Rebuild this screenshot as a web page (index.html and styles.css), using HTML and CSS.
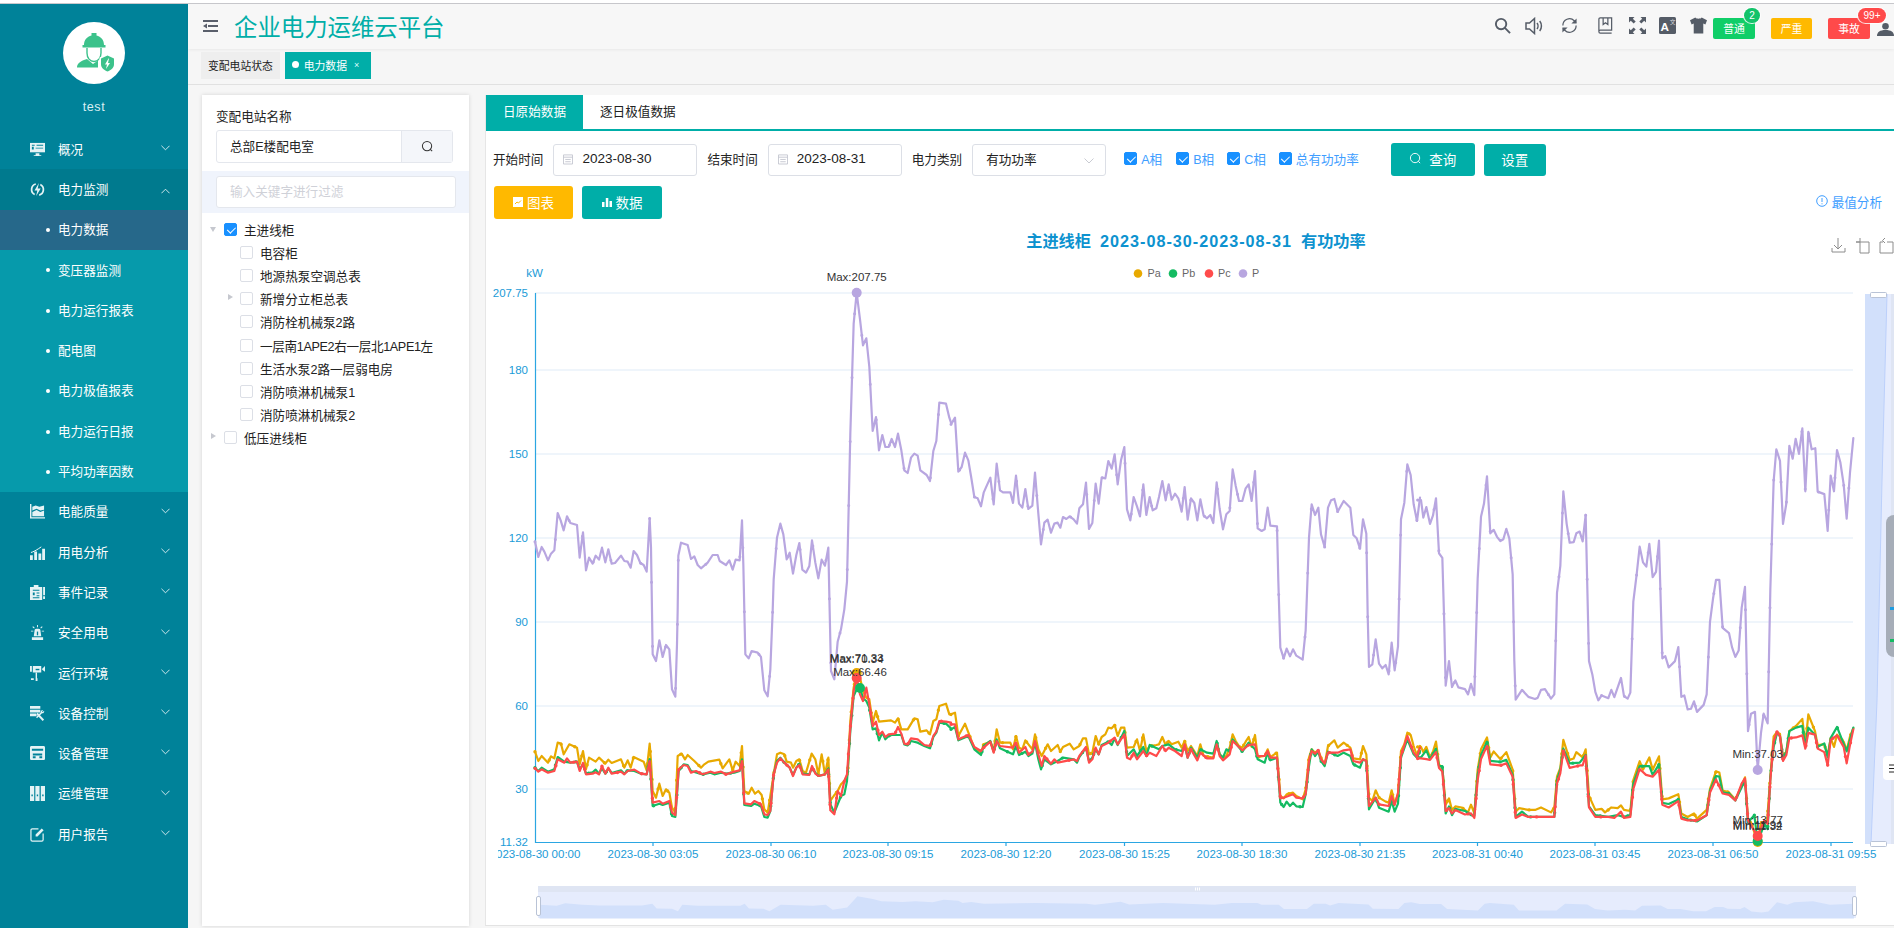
FILE: index.html
```html
<!DOCTYPE html>
<html lang="zh-CN">
<head>
<meta charset="utf-8">
<title>企业电力运维云平台</title>
<link rel="stylesheet" href="styles.css">
</head>
<body>
<div class="top-strip"></div>
<div class="app">
  <aside class="sidebar">
    <div class="profile">
      <div class="avatar">
        <svg viewBox="0 0 62 62" width="62" height="62">
          <path class="av-g" d="M21 23c0-5 3-8.500 7.500-9.500V11h5v2.500c4.500 1 7.500 4.500 7.500 9.500h1.500v2.500H19.500V23z"/>
          <path class="av-l" d="M24 26v5c0 5 3 8.500 7 8.500s7-3.500 7-8.500v-5"/>
          <path class="av-g" d="M14 45.500c0-4 3.500-6.500 10-8.500l6 5 5-3.500v7H14z"/>
          <path class="av-w" d="M36.500 35.500l8-3.500 8 3.500v6.500c0 4.500-3.500 7-8 8.500-4.500-1.500-8-4-8-8.500z"/>
          <path class="av-g" d="M38 36.500l6.500-3 6.500 3v5.500c0 4-3 6-6.500 7.500-3.500-1.500-6.500-3.500-6.500-7.500z"/>
          <path class="av-w" d="M45.500 36.500l-3.500 6h2l-1 4.500 4-6h-2l1-4.500z"/>
        </svg>
      </div>
      <div class="username">test</div>
    </div>
    <nav class="menu">
      <a class="menu-item"><svg class="m-ico" viewBox="0 0 16 16"><path d="M0 1h16v10H0z"/><path class="cut" d="M2 3h3v1H2zM7 3h7v1H7zM2 5h2v3H2zM6 6h8v1H6z"/><path d="M6 12h4v2h2v1H4v-1h2z"/></svg><span>概况</span><svg class="chev" viewBox="0 0 10 6"><path d="M.5.5 5 5 9.500.5"/></svg></a>
      <a class="menu-item open"><svg class="m-ico" viewBox="0 0 16 16"><path d="M6 1.200A7 7 0 0 0 4.600 14.200l.8-1.600A5.200 5.200 0 0 1 6.400 3zM10 14.800a7 7 0 0 0 1.400-13l-.8 1.600a5.200 5.200 0 0 1-1 9.600z"/><path d="M9.500 1 4.800 9h3l-1.200 6 4.800-8.200H8.200z"/></svg><span>电力监测</span><svg class="chev" viewBox="0 0 10 6"><path d="M.5 5.500 5 1l4.500 4.500"/></svg></a>
      <div class="submenu">
        <a class="sub-item active"><span>电力数据</span></a>
        <a class="sub-item"><span>变压器监测</span></a>
        <a class="sub-item"><span>电力运行报表</span></a>
        <a class="sub-item"><span>配电图</span></a>
        <a class="sub-item"><span>电力极值报表</span></a>
        <a class="sub-item"><span>电力运行日报</span></a>
        <a class="sub-item"><span>平均功率因数</span></a>
      </div>
      <a class="menu-item"><svg class="m-ico" viewBox="0 0 16 16"><path d="M0 0h1.500v14H16v1.500H0z"/><path d="M2.500 3 6 1.500 10 3l5-1.500V6l-4 1-4-2-4.500 2z"/><path d="M2.500 8.500 7 6.500l4 2 4-1.500v6H2.500z"/></svg><span>电能质量</span><svg class="chev" viewBox="0 0 10 6"><path d="M.5.5 5 5 9.500.5"/></svg></a>
      <a class="menu-item"><svg class="m-ico" viewBox="0 0 16 16"><path d="M0 11h3v5H0zM4.500 7h3v9h-3zM9 9h3v7H9zM13 4h3v12h-3z"/><path d="M1 8c2-.5 5-2 8-4l3-2" fill="none" stroke="#fff"/></svg><span>用电分析</span><svg class="chev" viewBox="0 0 10 6"><path d="M.5.5 5 5 9.500.5"/></svg></a>
      <a class="menu-item"><svg class="m-ico" viewBox="0 0 16 16"><path d="M0 2h13v14H0zM4 0h5v3H4zM14 2h2v9h-2zM14 12h2v3h-2z"/><path class="cut" d="M3 5h7v1H3zM3 8h2v3H3zM7 8h3v1H7zM7 11h3v1H7zM3 13h7v1H3z"/></svg><span>事件记录</span><svg class="chev" viewBox="0 0 10 6"><path d="M.5.5 5 5 9.500.5"/></svg></a>
      <a class="menu-item"><svg class="m-ico" viewBox="0 0 16 16"><path d="M4 12 5 5c.300-1.500 5.700-1.500 6 0l1 7zM2 13h12v3H2z"/><path class="cut" d="M7.300 7h1.400v4H7.300z"/><path d="M7.500 0h1v2.500h-1zM1 6h2.500v1H1zM12.500 6H15v1h-2.500zM2.500 2l.800-.700L5 3l-.700.700zM11 3l1.700-1.700.800.700-1.800 1.700z"/></svg><span>安全用电</span><svg class="chev" viewBox="0 0 10 6"><path d="M.5.5 5 5 9.500.5"/></svg></a>
      <a class="menu-item"><svg class="m-ico" viewBox="0 0 16 16"><path d="M0 0h2v6H0zM3 0h9v7H3zM13 3l3-3v6l-3-2z"/><path d="M6 7h1.500v6H6zM1 13h3v2H1zM6 13h2v3H6z"/><path class="cut" d="M6 3h4v1.500H6z"/></svg><span>运行环境</span><svg class="chev" viewBox="0 0 10 6"><path d="M.5.5 5 5 9.500.5"/></svg></a>
      <a class="menu-item"><svg class="m-ico" viewBox="0 0 16 16"><path d="M0 0h11v3H0zM0 4h11v3H0zM0 8h7v3H0z"/><path d="M15 5c.600 1.500-.600 3-2.200 2.800L7.500 13l-1-1 5-5.300C11 5.500 12.500 4 14 4.300L12.800 5.800 13.500 6.500z"/><path d="M8 7l7 7.500-1.500 1.500L7 9z"/></svg><span>设备控制</span><svg class="chev" viewBox="0 0 10 6"><path d="M.5.5 5 5 9.500.5"/></svg></a>
      <a class="menu-item"><svg class="m-ico" viewBox="0 0 16 16"><path d="M0 1.500C0 .700.700 0 1.500 0h13c.800 0 1.500.700 1.500 1.500v12c0 .800-.700 1.500-1.500 1.500h-13C.700 15 0 14.300 0 13.500z"/><path class="cut" d="M2 3h12v2H2zM3 8h10v2H3zM3 11h3v2H3zM10 11h3v2h-3z"/></svg><span>设备管理</span><svg class="chev" viewBox="0 0 10 6"><path d="M.5.5 5 5 9.500.5"/></svg></a>
      <a class="menu-item"><svg class="m-ico" viewBox="0 0 16 16"><path d="M0 0h4.500v16H0zM5.700 0h4.500v16H5.700zM11.500 0H16v16h-4.500z"/><path class="cut" d="M1.500 9h1.500v2H1.500zM7.200 9h1.500v2H7.200zM13 9h1.500v2H13z"/></svg><span>运维管理</span><svg class="chev" viewBox="0 0 10 6"><path d="M.5.5 5 5 9.500.5"/></svg></a>
      <a class="menu-item"><svg class="m-ico" viewBox="0 0 16 16"><path class="line" d="M9 2H2.500C1.500 2 1 2.500 1 3.500v10c0 1 .500 1.500 1.500 1.500h10c1 0 1.500-.500 1.500-1.500V7"/><path d="M6 8 12.500 1.500 14.500 3.500 8 10H6z"/></svg><span>用户报告</span><svg class="chev" viewBox="0 0 10 6"><path d="M.5.5 5 5 9.500.5"/></svg></a>
    </nav>
  </aside>

  <div class="main">
    <header class="header">
      <svg class="burger" viewBox="0 0 15 12"><path d="M0 0h15v2H0zM5 5h10v2H5zM0 10h15v2H0zM0 6l4-2.500v5z"/></svg>
      <h1 class="brand">企业电力运维云平台</h1>
      <div class="tools">
        <div class="tool-icons">
          <svg viewBox="0 0 18 18"><circle cx="7.500" cy="7.500" r="5.500" class="hs"/><path class="hs" d="m11.500 11.500 5.500 5.500"/></svg>
          <svg class="speaker" viewBox="0 0 20 18"><path class="hs med" d="M1 6h3.500L9.500 1.500v15L4.500 12H1z"/><path class="hs med" d="M12 6c1.300 1.600 1.300 4.400 0 6M14.700 4c2.300 2.800 2.300 7.200 0 10"/></svg>
          <svg viewBox="0 0 18 18"><path class="hs thin" d="M2 9a7 7 0 0 1 12-5l2 2"/><path class="hs thin" d="M16 9a7 7 0 0 1-12 5l-2-2"/><path class="hf" d="M16.500 1.500V7H11zM1.500 16.500V11H7z"/></svg>
          <svg viewBox="0 0 16 18"><path class="hs thin" d="M1 15V2.500C1 1.500 1.500 1 2.500 1h12v13H2.500C1.500 14 1 14.500 1 15.500S1.500 17 2.500 17h12"/><path class="hs thin" d="M5.500 1v7l2.500-2 2.500 2V1"/></svg>
          <svg viewBox="0 0 17 17"><path class="hf" d="M0 0h5.500L3.800 1.700l2.900 2.900-2 2-2.900-2.900L0 5.500zM17 0v5.500l-1.800-1.800-2.900 2.900-2-2 2.900-2.900L11.500 0zM0 17v-5.500l1.800 1.800 2.900-2.900 2 2-2.900 2.900L5.500 17zM17 17h-5.500l1.700-1.700-2.900-2.900 2-2 2.900 2.900 1.800-1.800z"/></svg>
          <svg viewBox="0 0 16 16"><rect class="hf" width="16" height="16" rx="1.500"/><text x="1.500" y="13.500" class="tr-a">A</text><text x="10" y="6.500" class="tr-b">文</text></svg>
          <svg viewBox="0 0 16 15"><path class="hf" d="M5 0C6 1.500 10 1.500 11 0l5 2.500-1.500 4-2-.8V15H3.500V5.700l-2 .8L0 2.500z"/></svg>
        </div>
        <span class="badge green"><span class="badge-t">普通</span><b class="bubble b-green">2</b></span>
        <span class="badge amber"><span class="badge-t">严重</span></span>
        <span class="badge red"><span class="badge-t">事故</span><b class="bubble b-red">99+</b></span>
        <svg class="person" viewBox="0 0 17 13"><circle class="hf" cx="8.500" cy="3.300" r="3.300"/><path class="hf" d="M0 13c0-4 3-6 8.500-6S17 9 17 13z"/></svg>
      </div>
    </header>
    <div class="tabbar">
      <span class="tab">变配电站状态</span>
      <span class="tab on"><i></i>电力数据<em>×</em></span>
    </div>
    <div class="content">
      <section class="tree-card">
        <div class="tree-label">变配电站名称</div>
        <div class="station-input">
          <span class="station-name">总部E楼配电室</span>
          <span class="station-btn"><svg viewBox="0 0 14 14"><circle cx="6.500" cy="6.500" r="5"/><path d="m10 10 2 2"/></svg></span>
        </div>
        <div class="filter-band"><div class="filter-input">输入关键字进行过滤</div></div>
        <ul class="tree">
          <li class="root"><i class="arrow down"></i><i class="cb checked"></i>主进线柜</li>
          <li class="child"><i class="cb"></i>电容柜</li>
          <li class="child"><i class="cb"></i>地源热泵空调总表</li>
          <li class="child"><i class="arrow right"></i><i class="cb"></i>新增分立柜总表</li>
          <li class="child"><i class="cb"></i>消防栓机械泵2路</li>
          <li class="child tight"><i class="cb"></i>一层南1APE2右一层北1APE1左</li>
          <li class="child"><i class="cb"></i>生活水泵2路一层弱电房</li>
          <li class="child"><i class="cb"></i>消防喷淋机械泵1</li>
          <li class="child"><i class="cb"></i>消防喷淋机械泵2</li>
          <li class="root"><i class="arrow right"></i><i class="cb"></i>低压进线柜</li>
        </ul>
      </section>

      <section class="data-card">
        <div class="data-tabs">
          <span class="data-tab on">日原始数据</span>
          <span class="data-tab">逐日极值数据</span>
        </div>
        <div class="filters">
          <label class="f-label">开始时间</label>
          <div class="field date w-start"><svg class="cal" viewBox="0 0 11 12"><path d="M.5 1.500h10v10H.5zM.5 4h10M2.500 6.500h6M2.500 9h6"/></svg>2023-08-30</div>
          <label class="f-label">结束时间</label>
          <div class="field date w-end"><svg class="cal" viewBox="0 0 11 12"><path d="M.5 1.500h10v10H.5zM.5 4h10M2.500 6.500h6M2.500 9h6"/></svg>2023-08-31</div>
          <label class="f-label">电力类别</label>
          <div class="field select">有功功率<svg class="sel-chev" viewBox="0 0 10 6"><path d="M.5.500 5 5 9.500.500"/></svg></div>
          <span class="check c-a"><i class="cb checked"></i>A相</span>
          <span class="check c-b"><i class="cb checked"></i>B相</span>
          <span class="check c-c"><i class="cb checked"></i>C相</span>
          <span class="check c-p"><i class="cb checked"></i>总有功功率</span>
          <button class="btn teal query"><svg viewBox="0 0 14 14"><circle cx="6.500" cy="6.500" r="5"/><path d="m10 10 2 2"/></svg>查询</button>
          <button class="btn teal setting">设置</button>
        </div>
        <div class="actions">
          <button class="btn amber-btn"><svg class="fill" viewBox="0 0 10 10"><path d="M0 0h10v10H0z"/><path class="cut2" d="m2 7 2-2 1.500 1L8 3.500"/></svg>图表</button>
          <button class="btn teal data-btn"><svg class="fill" viewBox="0 0 10 10"><path d="M0 5h2.500v5H0zM3.800 1h2.500v9H3.800zM7.500 4H10v6H7.500z"/></svg>数据</button>
          <span class="analysis"><svg viewBox="0 0 12 12"><circle cx="6" cy="6" r="5.300"/><path d="M6 3v4M6 8.300v1"/></svg>最值分析</span>
        </div>

        <svg class="chart" viewBox="485 226 1409 700" width="1409" height="700">
          <defs><clipPath id="cvClip"><rect x="497" y="226" width="1397" height="700"/></clipPath></defs>
          <text class="c-title" x="1195" y="245.500">主进线柜  <tspan class="c-date">2023-08-30-2023-08-31</tspan>  有功功率</text>

          <g class="toolbox">
            <path d="M1837 237v11m-4-4 4 4 4-4M1831 247v4h13v-4"/>
            <path d="M1855 241h13v11h-9v-15M1855 241h4"/>
            <path d="M1882 241h-3v11h13v-11h-6M1884 237l-2.500 2.500 2.500 2.500"/>
          </g>

          <g class="legend">
            <circle cx="1137" cy="272.500" r="4.300" fill="#e8a900"/><text x="1146.500" y="276">Pa</text>
            <circle cx="1172" cy="272.500" r="4.300" fill="#14bb62"/><text x="1181" y="276">Pb</text>
            <circle cx="1208" cy="272.500" r="4.300" fill="#ff4b4b"/><text x="1217" y="276">Pc</text>
            <circle cx="1242" cy="272.500" r="4.300" fill="#b8a6e0"/><text x="1251" y="276">P</text>
          </g>

          <g class="grid">
            <path d="M534 292H1852M534 369H1852M534 453H1852M534 537H1852M534 621H1852M534 705H1852M534 788H1852"/>
          </g>
          <path class="axis" d="M534.500 292V841.500H1852M652 841v4M770 841v4M887 841v4M1005 841v4M1123.500 841v4M1241 841v4M1359 841v4M1476.500 841v4M1594 841v4M1712 841v4M1830 841v4"/>

          <g class="y-labels">
            <text x="533.500" y="276">kW</text>
            <text x="527" y="296">207.75</text>
            <text x="527" y="373">180</text>
            <text x="527" y="457">150</text>
            <text x="527" y="541">120</text>
            <text x="527" y="625">90</text>
            <text x="527" y="709">60</text>
            <text x="527" y="792">30</text>
            <text x="527" y="845">11.32</text>
          </g>
          <g class="x-labels" clip-path="url(#cvClip)">
            <text x="534" y="857">2023-08-30 00:00</text>
            <text x="652" y="857">2023-08-30 03:05</text>
            <text x="770" y="857">2023-08-30 06:10</text>
            <text x="887" y="857">2023-08-30 09:15</text>
            <text x="1005" y="857">2023-08-30 12:20</text>
            <text x="1123.500" y="857">2023-08-30 15:25</text>
            <text x="1241" y="857">2023-08-30 18:30</text>
            <text x="1359" y="857">2023-08-30 21:35</text>
            <text x="1476.500" y="857">2023-08-31 00:40</text>
            <text x="1594" y="857">2023-08-31 03:45</text>
            <text x="1712" y="857">2023-08-31 06:50</text>
            <text x="1830" y="857">2023-08-31 09:55</text>
          </g>

          <g class="line-set s-pa">
            <g transform="translate(500 610) scale(.33333)"><polyline id="paA" points="102,422 112,450 122,435 141,455 150,436 160,442 170,395 180,398 188,430 205,400 228,410 236,460 246,420 255,475 264,440 284,452 294,440 313,458 322,446 332,456 360,445 370,470 380,448 389,470 398,438 428,452 437,478 446,398 450,450 455,540 465,560 475,518 485,555 495,535 505,545 513,590 523,605 530,435 542,428 552,445 560,432 580,450 600,470 610,460 622,452 655,446 665,472 685,445 695,478 704,452 716,465 723,405 730,540 743,548 752,530 762,548 772,540 782,552 790,595 800,605 808,555 818,490 828,430 838,425 850,430 857,452 870,455 876,470 886,450 895,445 905,480 915,485 932,428 943,445 952,490 962,430 972,490 982,440 988,570 998,555 1010,540 1020,520 1030,510 1040,490 1048,330 1058,230 1067,185 1077,200 1086,240 1096,260 1105,265 1115,335 1125,300 1134,332 1170,328 1182,335 1191,322 1201,355 1220,355 1240,322 1250,325 1258,362 1277,358 1287,370 1297,330 1306,325 1315,285 1335,278 1345,310 1350,312"/></g>
            <g transform="translate(950 380) scale(.33333)"><polyline id="paB" points="0,1000 12,995 22,1065 42,1028 60,1075 70,1100 90,1115 98,1090 118,1082 128,1110 137,1045 147,1085 178,1085 186,1105 195,1065 204,1100 214,1105 223,1078 244,1105 252,1060 262,1105 272,1125 290,1090 300,1110 320,1092 328,1112 336,1098 356,1088 368,1105 385,1095 396,1072 405,1072 414,1120 424,1115 434,1065 443,1090 452,1068 463,1060 472,1040 482,1042 491,1032 500,1065 510,1040 520,1040 528,1100 548,1098 558,1075 567,1110 577,1060 586,1110 596,1095 616,1092 624,1090 634,1068 644,1092 653,1080 662,1090 682,1082 692,1100 701,1080 710,1110 720,1095 739,1125 748,1090 758,1125 787,1130 797,1085 806,1120 816,1130 826,1125 836,1100 845,1060 854,1080 864,1095 874,1100 884,1082 893,1068 902,1098 912,1062 920,1128 941,1125 950,1105 958,1128 978,1115 988,1245 998,1252 1007,1240 1026,1235 1036,1245 1055,1255 1064,1225 1074,1130 1082,1105 1092,1115 1102,1108 1110,1130 1121,1152 1131,1095 1150,1078 1160,1100 1178,1085 1198,1100 1207,1132 1227,1135 1236,1095 1246,1120 1254,1250 1264,1260 1274,1228 1284,1250 1304,1262 1313,1265 1322,1228 1331,1268 1341,1240 1350,1110 1360,1090 1369,1055 1379,1062 1388,1095 1398,1125 1407,1095"/></g>
            <g transform="translate(1420 380) scale(.33333 .35014)"><polyline id="paC" points="-10,1045 0,1045 7,1060 16,1045 27,1075 36,1058 45,1030 54,1095 64,1105 74,1210 84,1192 93,1225 103,1215 122,1218 141,1232 150,1210 160,1235 170,1110 180,1052 198,1018 208,1075 218,1058 238,1080 256,1060 275,1110 284,1230 294,1220 322,1225 342,1225 360,1218 390,1232 400,1218 408,1130 418,1105 427,1025 437,1055 446,1082 458,1078 466,1060 485,1075 494,1052 504,1185 523,1225 542,1222 552,1232 571,1218 590,1220 600,1212 609,1225 628,1228 637,1140 656,1086 666,1110 685,1075 695,1110 714,1072 724,1195 743,1192 772,1180 781,1235 800,1245 819,1235 828,1250 857,1225 867,1165 885,1115 895,1118 905,1170 924,1175 943,1195 962,1155 972,1132 981,1250 990,1260 1010,1318 1020,1260 1038,1260 1048,1130 1058,1015 1068,1002 1077,1010 1086,1075 1096,1058 1105,1000 1125,985 1144,965 1153,1040 1162,952 1182,1000 1190,1040 1210,1038 1220,1070 1229,1020 1239,1045 1248,1010 1268,1030 1277,1055 1287,1015 1297,992"/></g>
          </g>
          <g class="dot-set s-pa"><use href="#paA" transform="translate(500 610) scale(.33333)"/><use href="#paB" transform="translate(950 380) scale(.33333)"/><use href="#paC" transform="translate(1420 380) scale(.33333 .35014)"/></g>

          <g class="line-set s-pb">
            <g transform="translate(500 610) scale(.33333)"><polyline id="pbA" points="102,470 112,480 122,470 141,482 160,475 170,438 190,452 208,455 228,452 236,475 246,460 255,488 275,484 284,476 294,488 303,472 313,488 322,472 332,486 360,478 370,488 380,478 400,480 420,488 437,490 446,444 455,585 475,578 485,582 505,575 513,615 523,618 533,480 548,460 560,462 570,480 585,484 605,490 628,485 640,490 660,485 675,488 700,485 716,480 723,445 730,582 750,585 760,578 780,585 790,618 800,620 808,600 818,490 828,450 838,440 850,455 866,470 876,492 886,470 895,458 905,488 925,490 933,470 943,485 952,495 972,490 982,472 988,580 1000,605 1010,580 1020,555 1030,550 1038,510 1048,360 1058,255 1067,235 1077,230 1086,262 1096,270 1105,290 1115,355 1125,352 1134,388 1144,365 1153,385 1163,375 1172,372 1201,372 1210,400 1220,403 1230,390 1250,395 1270,405 1287,412 1297,378 1306,365 1315,335 1335,338 1350,352"/></g>
            <g transform="translate(950 380) scale(.33333)"><polyline id="pbB" points="0,1045 12,1038 22,1078 52,1065 70,1105 90,1122 98,1095 118,1080 128,1112 137,1075 147,1102 186,1120 195,1095 204,1122 223,1112 232,1125 244,1118 252,1085 262,1135 270,1165 280,1135 300,1150 320,1140 336,1130 368,1135 378,1145 385,1128 405,1100 414,1140 424,1130 434,1105 443,1120 452,1092 472,1082 482,1092 491,1072 500,1092 520,1050 528,1125 548,1105 558,1125 577,1098 586,1125 596,1092 624,1105 634,1095 653,1090 672,1105 692,1110 701,1095 710,1130 720,1100 739,1130 748,1105 768,1115 787,1118 797,1080 806,1120 816,1130 826,1105 836,1110 845,1075 874,1112 893,1085 912,1105 920,1135 941,1145 950,1115 958,1138 978,1130 988,1265 998,1278 1007,1262 1017,1275 1026,1265 1036,1276 1055,1278 1064,1240 1074,1155 1082,1105 1092,1125 1102,1112 1110,1140 1121,1155 1131,1112 1160,1125 1178,1115 1198,1125 1207,1150 1227,1160 1236,1135 1246,1140 1254,1285 1274,1250 1284,1280 1313,1292 1322,1260 1331,1292 1341,1268 1350,1130 1369,1075 1388,1120 1398,1130 1407,1110"/></g>
            <g transform="translate(1420 380) scale(.33333 .35014)"><polyline id="pbC" points="-10,1075 0,1075 16,1055 27,1080 45,1050 54,1100 64,1100 74,1235 84,1215 93,1240 103,1222 132,1228 150,1240 160,1242 170,1125 180,1068 198,1030 208,1085 238,1088 256,1082 275,1125 284,1245 303,1230 322,1245 390,1245 400,1245 408,1140 418,1110 427,1050 446,1092 476,1090 494,1068 504,1215 523,1240 562,1245 590,1240 609,1245 628,1240 637,1150 656,1100 685,1100 695,1125 714,1095 724,1205 743,1208 772,1195 781,1245 800,1252 828,1258 857,1240 867,1170 885,1128 895,1130 905,1175 924,1178 943,1198 962,1160 972,1140 981,1260 1000,1240 1010,1318 1030,1265 1040,1280 1048,1132 1058,1045 1068,1005 1077,1015 1086,1075 1096,1060 1105,1000 1125,990 1144,985 1153,1045 1162,990 1182,1010 1190,1045 1210,1035 1220,1075 1229,1020 1248,988 1277,1058 1297,990"/></g>
          </g>
          <g class="dot-set s-pb"><use href="#pbA" transform="translate(500 610) scale(.33333)"/><use href="#pbB" transform="translate(950 380) scale(.33333)"/><use href="#pbC" transform="translate(1420 380) scale(.33333 .35014)"/></g>

          <g class="line-set s-pc">
            <g transform="translate(500 610) scale(.33333)"><polyline id="pcA" points="102,472 112,482 122,475 141,485 160,480 170,445 190,455 198,442 208,455 228,452 236,480 246,456 255,490 275,488 284,484 294,490 303,465 313,488 322,470 332,488 360,482 370,490 380,480 400,476 420,488 437,490 446,450 455,575 475,570 485,578 505,570 513,605 523,612 533,475 548,462 560,465 570,485 585,480 605,490 628,482 640,486 660,482 675,490 700,482 716,478 723,450 730,577 750,580 760,570 780,580 790,610 800,612 808,600 818,490 828,455 838,442 850,455 866,470 876,495 886,470 895,462 905,490 925,492 933,465 943,488 952,495 972,490 982,475 988,598 1000,610 1010,540 1020,555 1030,510 1038,490 1048,350 1058,240 1067,200 1077,250 1086,270 1096,230 1105,280 1115,345 1125,332 1134,372 1144,362 1153,378 1163,370 1182,368 1191,348 1201,368 1210,398 1220,400 1230,382 1250,385 1270,402 1287,405 1297,375 1306,362 1315,330 1335,332 1350,335"/></g>
            <g transform="translate(950 380) scale(.33333)"><polyline id="pcB" points="0,1030 12,1030 22,1075 52,1062 70,1098 90,1110 98,1100 118,1082 128,1115 137,1080 147,1095 186,1100 195,1085 204,1115 223,1098 232,1120 244,1112 252,1080 262,1120 272,1155 280,1125 300,1148 310,1135 320,1145 368,1135 378,1140 385,1125 405,1098 414,1145 424,1135 434,1100 443,1120 452,1095 472,1085 491,1070 500,1090 520,1060 528,1130 538,1135 548,1115 558,1135 577,1110 586,1125 596,1115 616,1125 634,1095 644,1110 653,1100 672,1110 692,1125 701,1090 710,1130 720,1105 739,1138 748,1115 768,1132 787,1132 797,1090 806,1125 816,1138 836,1120 845,1080 874,1108 893,1092 912,1090 920,1125 941,1125 950,1110 958,1130 978,1130 988,1252 998,1250 1026,1240 1036,1250 1055,1252 1064,1240 1074,1140 1082,1110 1092,1118 1102,1108 1110,1135 1121,1148 1131,1115 1160,1115 1178,1108 1198,1105 1207,1140 1227,1145 1236,1135 1246,1140 1254,1275 1274,1250 1284,1270 1313,1275 1322,1245 1331,1272 1341,1235 1350,1125 1369,1065 1388,1115 1398,1128 1407,1100"/></g>
            <g transform="translate(1420 380) scale(.33333 .35014)"><polyline id="pcC" points="-10,1078 0,1078 16,1080 27,1082 45,1060 54,1105 64,1115 74,1228 84,1220 93,1235 103,1225 132,1238 150,1235 160,1248 170,1140 180,1080 198,1042 208,1095 238,1098 256,1092 275,1130 284,1248 303,1238 322,1245 390,1245 400,1245 408,1150 418,1120 427,1055 446,1105 476,1098 485,1098 494,1070 504,1218 523,1245 562,1245 580,1248 600,1230 609,1248 628,1245 637,1165 656,1108 675,1125 695,1130 714,1110 724,1210 743,1218 772,1200 781,1250 800,1255 828,1255 857,1240 867,1175 885,1138 905,1178 924,1182 943,1198 962,1150 972,1135 981,1255 1010,1300 1030,1255 1040,1265 1048,1140 1058,1030 1068,1002 1077,1015 1086,1085 1096,1068 1105,1020 1125,1018 1144,1012 1153,1050 1162,1005 1182,1010 1190,1050 1210,1060 1220,1098 1229,1025 1248,1012 1268,1045 1277,1092 1287,1040 1297,995"/></g>
          </g>
          <g class="dot-set s-pc"><use href="#pcA" transform="translate(500 610) scale(.33333)"/><use href="#pcB" transform="translate(950 380) scale(.33333)"/><use href="#pcC" transform="translate(1420 380) scale(.33333 .35014)"/></g>

          <g class="line-set s-p">
            <g transform="translate(500 280) scale(.33333)"><polyline id="pA" points="102,782 112,828 122,798 130,812 141,838 150,818 160,808 170,696 179,718 188,748 198,706 208,726 228,732 236,830 246,754 255,868 264,830 275,848 284,824 294,836 303,800 313,844 322,805 332,848 342,846 360,824 370,840 380,842 389,860 398,810 408,822 418,846 428,852 437,872 446,712 450,800 453,990 455,1120 465,1140 475,1078 485,1128 495,1092 505,1105 513,1225 523,1247 528,1090 530,990 532,824 540,785 560,792 570,834 580,826 590,852 600,862 620,845 635,822 650,822 656,840 675,852 685,838 695,866 704,836 716,838 723,718 727,850 730,990 733,1120 743,1132 752,1110 770,1115 780,1128 790,1228 800,1246 808,1165 815,990 818,896 828,770 838,728 847,760 857,835 866,815 876,878 886,822 895,786 904,866 915,875 925,855 933,778 943,845 952,892 962,836 972,854 982,800 986,990 990,1170 1000,1195 1010,1082 1020,1045 1030,985 1038,902 1048,458 1058,128 1067,35 1077,115 1086,193 1096,172 1105,258 1115,450 1125,408 1134,508 1144,462 1153,498 1163,498 1172,474 1182,498 1191,458 1201,508 1210,568 1220,576 1230,530 1240,518 1250,524 1258,568 1277,582 1287,600 1297,510 1306,480 1315,365 1335,368 1345,410 1350,425"/></g>
            <g transform="translate(950 380) scale(.33333)"><polyline id="pB" points="0,130 12,110 22,272 32,258 42,215 52,238 60,285 70,348 80,352 90,376 98,335 118,290 128,370 137,248 147,328 156,334 178,334 186,366 195,284 204,368 214,380 223,324 232,384 244,374 252,275 262,398 270,490 280,425 290,416 300,455 310,428 320,425 328,440 336,408 346,414 356,406 368,415 378,428 385,382 396,370 405,305 414,444 424,426 434,308 443,368 452,290 463,292 472,240 482,263 491,220 500,310 510,238 520,198 528,385 538,418 548,348 558,376 567,406 577,310 586,402 596,348 605,388 616,382 624,348 634,300 644,358 653,310 662,356 672,338 682,352 692,392 701,318 710,416 720,352 730,366 739,418 748,355 758,404 768,412 778,402 787,426 797,304 806,384 816,445 826,400 836,390 845,265 854,314 864,360 874,360 884,322 893,310 902,360 912,270 920,442 932,450 941,445 950,380 958,434 978,436 982,600 988,800 998,832 1007,803 1017,826 1026,805 1036,824 1055,836 1064,748 1074,470 1082,370 1092,402 1102,380 1110,460 1121,498 1131,380 1140,358 1150,354 1160,392 1178,360 1198,380 1207,462 1217,472 1227,503 1236,415 1246,458 1250,700 1254,858 1264,850 1274,775 1284,848 1294,862 1304,852 1313,880 1322,785 1331,868 1341,796 1350,415 1360,365 1369,250 1379,282 1388,370 1398,420 1407,350"/></g>
            <g transform="translate(1420 380) scale(.33333 .35014)"><polyline id="pC" points="-10,340 0,340 7,390 16,360 27,408 36,384 45,335 54,492 64,505 70,700 74,870 84,800 93,874 103,855 112,875 132,880 141,895 150,865 160,897 170,565 180,388 189,350 198,272 208,435 218,425 228,445 238,457 247,452 256,422 265,450 275,552 280,800 284,910 303,882 322,902 342,908 350,905 360,882 372,880 390,907 400,895 408,605 418,528 427,315 437,408 446,462 458,460 466,435 476,430 485,458 494,382 504,800 514,838 523,888 532,912 542,898 562,906 571,882 580,903 600,848 609,900 620,907 628,890 637,630 647,552 656,473 666,518 676,530 685,465 695,560 705,545 714,456 724,792 733,786 743,818 762,800 772,760 781,902 790,898 800,938 810,936 819,915 828,945 848,925 857,895 867,688 876,622 885,568 895,568 905,705 924,720 933,760 943,788 953,770 962,648 972,588 981,1000 990,950 1002,945 1010,1110 1020,1005 1028,950 1040,978 1048,596 1058,285 1066,195 1077,228 1086,408 1096,350 1105,185 1115,222 1124,165 1134,208 1144,135 1153,315 1162,145 1172,195 1183,192 1190,316 1210,323 1220,428 1229,270 1239,315 1248,197 1258,232 1268,295 1277,393 1287,262 1297,163"/></g>
          </g>
          <g class="dot-set s-p"><use href="#pA" transform="translate(500 280) scale(.33333)"/><use href="#pB" transform="translate(950 380) scale(.33333)"/><use href="#pC" transform="translate(1420 380) scale(.33333 .35014)"/></g>

          <g class="marks">
            <circle cx="855.700" cy="291.700" r="5" fill="#b8a6e0"/>
            <circle cx="855.700" cy="672" r="5" fill="#e8a900"/>
            <circle cx="859" cy="687" r="5" fill="#14bb62"/>
            <circle cx="855.700" cy="677" r="5" fill="#ff4b4b"/>
            <circle cx="1756.700" cy="769" r="5" fill="#b8a6e0"/>
            <circle cx="1756.700" cy="841" r="5" fill="#e8a900"/>
            <circle cx="1756.700" cy="840" r="5" fill="#14bb62"/>
            <circle cx="1756.700" cy="835" r="5" fill="#ff4b4b"/>
          </g>
          <g class="mark-labels">
            <text x="855.700" y="279.500">Max:207.75</text>
            <text x="855.700" y="661">Max:71.33</text>
            <text x="855.700" y="662">Max:70.34</text>
            <text x="859" y="675">Max:66.46</text>
            <text x="1756.700" y="757">Min:37.03</text>
            <text x="1756.700" y="823">Min:13.77</text>
            <text x="1756.700" y="828">Min:11.94</text>
            <text x="1756.700" y="829">Min:11.32</text>
          </g>

          <g class="zoom-h">
            <rect class="z-band" x="537" y="885" width="1318" height="6"/>
            <rect class="z-bg" x="537" y="891" width="1318" height="26"/>
            <g transform="translate(530 875) scale(.8546 .3378)"><polygon class="z-fill" points="10,126 10,85 30,88 40,81 60,85 80,87 130,87 142,82 147,96 165,97 172,104 177,85 195,88 245,88 250,82 255,96 272,97 279,104 292,85 330,88 345,85 353,100 370,93 382,60 400,68 410,75 435,77 450,75 470,78 483,70 500,73 505,80 515,77 530,82 590,80 650,82 660,85 690,76 700,84 740,80 800,85 820,80 850,80 855,85 875,85 881,98 908,98 916,82 930,82 935,87 945,80 980,84 985,97 1015,98 1022,80 1030,78 1040,83 1065,83 1072,98 1108,102 1116,82 1122,80 1150,85 1156,102 1200,102 1210,82 1236,84 1245,98 1260,102 1280,100 1292,102 1300,88 1322,87 1330,98 1345,98 1360,104 1375,104 1385,92 1395,92 1400,97 1415,98 1420,92 1428,105 1440,108 1448,105 1458,78 1470,85 1478,78 1500,75 1520,85 1548,82 1548,126"/></g>
            <rect class="z-handle" x="535.500" y="895.500" width="4" height="19" rx="1.500"/>
            <rect class="z-handle" x="1851.500" y="895.500" width="4" height="19" rx="1.500"/>
            <path class="z-grip" d="M1194.500 886.500v3M1196.500 886.500v3M1198.500 886.500v3"/>
          </g>

          <g class="zoom-v">
            <rect class="z-bg" x="1864" y="293" width="30" height="550"/>
            <rect class="z-band" x="1890" y="293" width="4" height="550"/>
            <polygon class="z-fill" points="1864,293 1886,293 1881,480 1876,700 1870,843 1864,843"/>
            <path class="z-edge" d="M1886 293 1881 480 1876 700 1870 843"/>
            <rect class="z-handle" x="1869.500" y="291.500" width="16" height="5" rx="1"/>
            <rect class="z-handle" x="1869.500" y="840.500" width="16" height="5" rx="1"/>
          </g>
        </svg>
      </section>
    </div>
  </div>
</div>
<div class="float-panel"><i class="fp-blue"></i><i class="fp-green"></i></div>
<div class="float-pill"><svg viewBox="0 0 5 9"><path d="M0 1h5M0 4.500h5M0 8h5"/></svg></div>
</body>
</html>
```

FILE: styles.css
```css
* { box-sizing: border-box; }
html, body { margin: 0; padding: 0; height: 100%; overflow: hidden; }
body {
  font-family: "Liberation Sans", "Noto Sans CJK SC", sans-serif;
  font-size: 12.6px;
  color: #222;
  background: #f6f6f6;
}
ul { list-style: none; margin: 0; padding: 0; }
i, em { font-style: normal; }

.top-strip { height: 4px; background: #fff; border-bottom: 1px solid #c9c9cd; }
.app { display: flex; height: 924px; }

/* Sidebar */
.sidebar { width: 188px; flex: none; background: #008299; color: #fff; }
.profile { height: 125px; padding-top: 18px; display: flex; flex-direction: column; align-items: center; }
.avatar { width: 62px; height: 62px; border-radius: 50%; background: #fff; }
.avatar svg { display: block; }
.av-g { fill: #3cc28b; }
.av-w { fill: #fff; }
.av-l { fill: none; stroke: #3cc28b; stroke-width: 1.400; }
.username { margin-top: 15px; font-size: 12.600px; letter-spacing: .6px; color: #d9eff3; line-height: 16px; }
.menu-item { display: flex; align-items: center; height: 40.300px; padding-left: 30px; position: relative; color: #fff; }
.menu-item > span, .sub-item > span { padding-bottom: 2px; }
.menu-item.open { background: #007a8e; }
.m-ico { width: 15px; height: 15px; flex: none; margin-right: 13px; fill: #e4f3f5; }
.m-ico .cut { fill: #008299; }
.menu-item.open .m-ico .cut { fill: #007a8e; }
.m-ico .line { fill: none; stroke: #e4f3f5; stroke-width: 1.300; }
.chev { position: absolute; left: 161px; top: 16px; width: 9px; height: 6px; fill: none; stroke: #e3f2f5; stroke-width: 1; }
.menu-item.open .chev { top: 19px; }
.submenu { background: #069aab; }
.sub-item { display: flex; align-items: center; height: 40.300px; padding-left: 58px; color: #fff; position: relative; }
.sub-item::before { content: ""; position: absolute; left: 45.500px; top: 18.500px; width: 4px; height: 4px; border-radius: 50%; background: #fff; }
.sub-item.active { background: #26688a; }

/* Header */
.main { flex: 1; min-width: 0; display: flex; flex-direction: column; }
.header { height: 45px; flex: none; background: #f7f7f7; display: flex; align-items: center; padding-left: 15px; box-shadow: 0 1px 3px rgba(0,0,0,.06); position: relative; }
.burger { width: 15px; height: 12px; fill: #5a5f6b; margin-top: -1px; }
.brand { margin: 4px 0 0 16px; font-weight: 400; font-size: 23.400px; color: #00aea8; line-height: 1; }
.tools { margin-left: auto; display: flex; align-items: center; height: 100%; }
.tool-icons { display: grid; grid-template-columns: 32px 34px 34px 38px 26px 34px 28px; justify-items: center; align-items: center; margin-top: -2px; }
.tool-icons svg { width: 17px; height: 17px; display: block; }
.tool-icons .speaker { width: 20px; height: 18px; }
.hs { fill: none; stroke: #555c67; stroke-width: 2; }
.hs.thin { stroke-width: 1.300; }
.hs.med { stroke-width: 1.500; }
.hf { fill: #555c67; }
.tr-a { fill: #fff; font-size: 11px; font-weight: 700; }
.tr-b { fill: #d8dade; font-size: 5.500px; }
.badge { position: relative; width: 42px; height: 21px; margin-top: 4px; margin-left: 16px; border-radius: 2px; color: #fff; font-size: 10.800px; display: flex; align-items: center; justify-content: center; }
.badge-t { padding-bottom: 2px; }
.badge.green { background: #10ce68; margin-left: 1px; }
.badge.amber { background: #ffb900; width: 41px; }
.badge.red { background: #ff4a4a; }
.bubble { position: absolute; font-weight: 400; font-size: 10px; color: #fff; line-height: 15px; text-align: center; border-radius: 9px; box-shadow: 0 0 0 1px rgba(255,255,255,.8); }
.b-green { left: 31px; top: -10px; width: 16px; height: 15px; background: #13c36a; }
.b-red { left: 30px; top: -10px; width: 28px; height: 15px; background: #ff4a4a; }
.person { width: 17px; height: 13px; margin: 6px 0 0 7px; flex: none; }

/* Tabs */
.tabbar { height: 36px; flex: none; display: flex; align-items: flex-start; gap: 5px; padding: 3px 0 0 13px; border-bottom: 1px solid #e1e1e1; }
.tab { height: 27px; padding: 0 7px 2px; display: flex; align-items: center; font-size: 10.800px; background: #eee; color: #222; }
.tab.on { background: #00aea8; color: #fff; padding: 0 12px 2px 7px; }
.tab.on i { width: 7px; height: 7px; border-radius: 50%; background: #fff; margin-right: 5px; }
.tab.on em { margin-left: 7px; font-size: 9px; color: #dff; }

/* Content */
.content { flex: 1; min-height: 0; display: flex; gap: 16px; padding: 10px 0 2px 14px; }
.tree-card { width: 267px; flex: none; background: #fff; box-shadow: 0 0 4px rgba(0,0,0,.14); padding-top: 15px; }
.tree-label { padding-left: 14px; line-height: 14px; font-size: 12.600px; }
.station-input { display: flex; height: 33px; margin: 6px 16px 0 14px; border: 1px solid #e4e7ed; border-radius: 3px; }
.station-name { flex: 1; display: flex; align-items: center; padding: 0 0 3px 13px; }
.station-btn { width: 51px; display: flex; align-items: center; justify-content: center; background: #f4f6fa; border-left: 1px solid #e4e7ed; }
.station-btn svg { width: 13px; height: 13px; fill: none; stroke: #333; stroke-width: 1.100; }
.filter-band { margin-top: 8px; height: 42px; background: #f0f4fc; padding: 5px 13px 0 14px; }
.filter-input { height: 32px; background: #fff; border: 1px solid #e4e7ed; border-radius: 3px; padding: 0 0 3px 13px; display: flex; align-items: center; color: #cfd1d8; }
.tree { padding-top: 4.500px; }
.tree li { height: 23.200px; display: flex; align-items: center; position: relative; white-space: nowrap; }
.tree .root { padding-left: 22px; }
.tree .child { padding-left: 38px; }
.tree .tight { letter-spacing: -.35px; }
.cb { width: 13px; height: 13px; flex: none; border: 1px solid #dcdfe6; border-radius: 2px; background: #fff; margin-right: 7px; display: inline-block; position: relative; }
.cb.checked { background: #1890ff; border-color: #1890ff; }
.cb.checked::after { content: ""; position: absolute; left: 3.500px; top: 1px; width: 3.500px; height: 7px; border: solid #fff; border-width: 0 1.200px 1.200px 0; transform: rotate(45deg); }
.arrow { position: absolute; width: 0; height: 0; }
.arrow.down { left: 8px; top: 9px; border: 3.500px solid transparent; border-top: 5px solid #c6c8cf; border-bottom: 0; }
.arrow.right { top: 7px; border: 3.500px solid transparent; border-left: 5px solid #c6c8cf; border-right: 0; }
.root .arrow.right { left: 9px; }
.child .arrow.right { left: 26px; }

.data-card { flex: 1; min-width: 0; background: #fff; border: 1px solid #e6e6e6; border-right: 0; border-bottom: 1px solid #e3e3e3; border-top: 0; }
.data-tabs { display: flex; height: 36px; border-bottom: 2px solid #00aea8; }
.data-tab { display: flex; align-items: center; justify-content: center; padding: 0 17px 3px; height: 34px; white-space: nowrap; }
.data-tab:first-child { padding: 0 0 3px; width: 97px; }
.data-tab.on { background: #00aea8; color: #fff; }
.filters { display: flex; align-items: center; height: 33px; margin-top: 12px; position: relative; }
.f-label { flex: none; padding-bottom: 3px; }
.filters .f-label:first-child { margin-left: 7px; }
.field { height: 32px; border: 1px solid #dcdfe6; border-radius: 3px; display: flex; align-items: center; margin: 0 10px; padding-bottom: 2px; font-size: 13.500px; position: relative; flex: none; }
.date { padding-left: 9px; }
.w-start { width: 144px; }
.w-end { width: 134px; }
.cal { width: 10px; height: 12px; margin-right: 9px; fill: none; stroke: #c3c6d0; stroke-width: 1; }
.select { width: 134px; padding-left: 13px; font-size: 12.600px; }
.sel-chev { position: absolute; right: 11px; top: 13px; width: 10px; height: 6px; fill: none; stroke: #c9cbd2; }
.check { display: flex; align-items: center; color: #409eff; flex: none; padding-bottom: 3px; }
.check .cb { margin-right: 4px; }
.c-a { margin-left: 8px; }
.c-b { margin-left: 14px; }
.c-c { margin-left: 13px; }
.c-p { margin-left: 13px; }
.btn { border: 0; border-radius: 3px; color: #fff; font: inherit; font-size: 13.500px; display: flex; align-items: center; justify-content: center; padding: 0 0 2px; flex: none; }
.teal { background: #00aea8; }
.amber-btn { background: #ffb900; }
.query { width: 84px; height: 33px; margin-left: 32px; }
.query svg { width: 13px; height: 13px; margin-right: 7px; fill: none; stroke: #fff; stroke-width: 1; }
.setting { width: 62px; height: 32px; margin-left: 9px; }
.actions { display: flex; align-items: center; height: 33px; margin-top: 10px; padding-left: 8px; gap: 9px; position: relative; }
.actions .btn { height: 33px; width: 79px; }
.actions .data-btn { width: 80px; }
.fill { width: 10px; height: 10px; margin-right: 4px; fill: #fff; }
.cut2 { fill: none; stroke: #ffb900; stroke-width: 1; }
.analysis { margin-left: auto; margin-right: 12px; padding-bottom: 3px; color: #409eff; display: flex; align-items: center; }
.analysis svg { width: 12px; height: 12px; margin-right: 4px; fill: none; stroke: #409eff; stroke-width: 1; }

/* Chart */
.chart { display: block; margin-top: 8px; font-family: "Liberation Sans", "Noto Sans CJK SC", sans-serif; }
.c-title { text-anchor: middle; font-size: 16.200px; font-weight: 700; fill: #0d92cf; white-space: pre; }
.c-date { letter-spacing: 1px; }
.toolbox path { fill: none; stroke: #8c8c8c; stroke-width: 1; }
.legend text { font-size: 10.800px; fill: #666; }
.grid path { fill: none; stroke: #e0ebf7; stroke-width: 1.200; }
.axis { fill: none; stroke: #2ba6e2; stroke-width: 1.200; }
.y-labels text { font-size: 11.500px; fill: #1a9bd7; text-anchor: end; }
.y-labels text:first-child { text-anchor: middle; }
.x-labels text { font-size: 11.500px; fill: #1a9bd7; text-anchor: middle; }
polyline { fill: none; vector-effect: non-scaling-stroke; stroke-linejoin: round; stroke-linecap: round; }
.line-set { stroke-width: 2.200; }
.dot-set { stroke-width: 3.400; stroke-dasharray: 0 28; }
.s-pa { stroke: #e8a900; }
.s-pb { stroke: #14bb62; }
.s-pc { stroke: #ff4b4b; }
.s-p { stroke: #b8a6e0; }
.dot-set.s-p { stroke-width: 3; stroke-dasharray: 0 64; }
.mark-labels text { font-size: 11.500px; fill: #333; text-anchor: middle; }
.z-band { fill: #dfe5f3; }
.z-bg { fill: #e6ecfd; }
.z-fill { fill: #d2e0fb; }
.z-edge { fill: none; stroke: #bcd0fb; stroke-width: 1; }
.z-handle { fill: #fff; stroke: #b9c3d6; stroke-width: 1; }
.z-grip { fill: none; stroke: #fff; stroke-width: 1; }

/* Floating side widgets */
.float-panel { position: absolute; left: 1886px; top: 515px; width: 8px; height: 142px; background: #a6adb8; border-radius: 8px 0 0 8px; }
.fp-blue { position: absolute; right: 0; top: 92px; width: 4px; height: 3px; background: #1e9be0; }
.fp-green { position: absolute; right: 0; top: 124px; width: 4px; height: 3px; background: #14bb62; }
.float-pill { position: absolute; left: 1883px; top: 756px; width: 11px; height: 24px; background: #fff; border-radius: 4px 0 0 4px; display: flex; align-items: center; padding-left: 6px; }
.float-pill svg { width: 5px; height: 9px; fill: none; stroke: #222; stroke-width: 1; }
```
